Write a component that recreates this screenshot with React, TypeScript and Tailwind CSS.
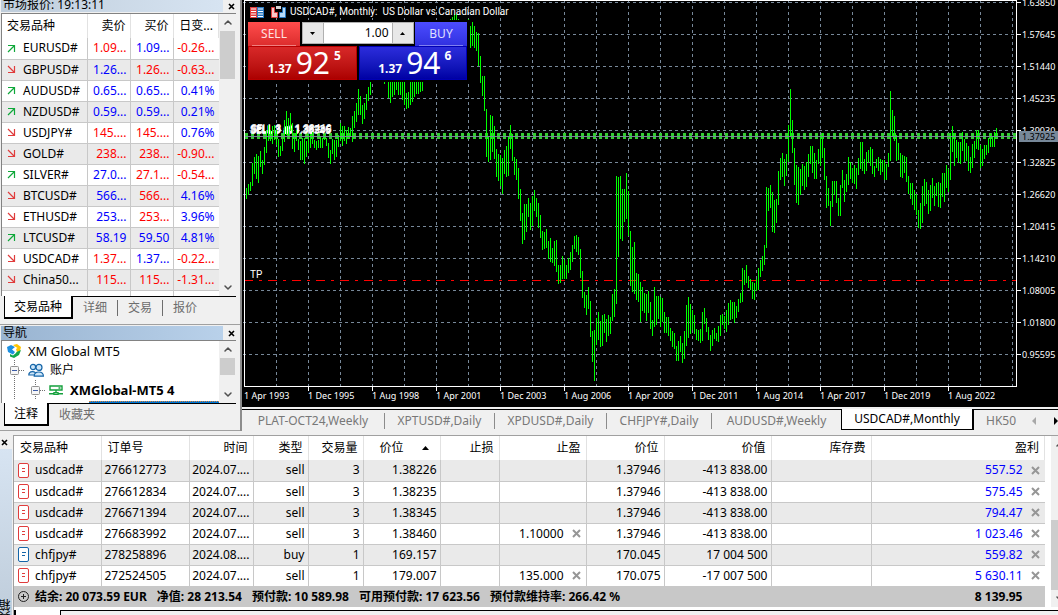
import { clsx } from "clsx";
import { ChevronDown, ChevronUp } from "lucide-react";

type Tone = "up" | "down";

type Quote = {
  symbol: string;
  trend: Tone;
  bid: [string, Tone];
  ask: [string, Tone];
  change: [string, Tone];
};

const quotes: Quote[] = [
  { symbol: "EURUSD#", trend: "up", bid: ["1.09...", "down"], ask: ["1.09...", "up"], change: ["-0.26...", "down"] },
  { symbol: "GBPUSD#", trend: "down", bid: ["1.26...", "up"], ask: ["1.26...", "down"], change: ["-0.63...", "down"] },
  { symbol: "AUDUSD#", trend: "up", bid: ["0.65...", "up"], ask: ["0.65...", "up"], change: ["0.41%", "up"] },
  { symbol: "NZDUSD#", trend: "up", bid: ["0.59...", "up"], ask: ["0.59...", "up"], change: ["0.21%", "up"] },
  { symbol: "USDJPY#", trend: "down", bid: ["145....", "down"], ask: ["145....", "down"], change: ["0.76%", "up"] },
  { symbol: "GOLD#", trend: "down", bid: ["238...", "down"], ask: ["238...", "down"], change: ["-0.90...", "down"] },
  { symbol: "SILVER#", trend: "up", bid: ["27.0...", "up"], ask: ["27.1...", "down"], change: ["-0.54...", "down"] },
  { symbol: "BTCUSD#", trend: "down", bid: ["566...", "up"], ask: ["566...", "down"], change: ["4.16%", "up"] },
  { symbol: "ETHUSD#", trend: "down", bid: ["253...", "up"], ask: ["253...", "down"], change: ["3.96%", "up"] },
  { symbol: "LTCUSD#", trend: "up", bid: ["58.19", "up"], ask: ["59.50", "up"], change: ["4.81%", "up"] },
  { symbol: "USDCAD#", trend: "down", bid: ["1.37...", "down"], ask: ["1.37...", "up"], change: ["-0.22...", "down"] },
  { symbol: "China50...", trend: "down", bid: ["115...", "down"], ask: ["115...", "down"], change: ["-1.31...", "down"] },
];

type Position = {
  symbol: string;
  order: string;
  time: string;
  type: "sell" | "buy";
  volume: string;
  open: string;
  tp?: string;
  price: string;
  value: string;
  profit: string;
};

const positions: Position[] = [
  { symbol: "usdcad#", order: "276612773", time: "2024.07....", type: "sell", volume: "3", open: "1.38226", price: "1.37946", value: "-413 838.00", profit: "557.52" },
  { symbol: "usdcad#", order: "276612834", time: "2024.07....", type: "sell", volume: "3", open: "1.38235", price: "1.37946", value: "-413 838.00", profit: "575.45" },
  { symbol: "usdcad#", order: "276671394", time: "2024.07....", type: "sell", volume: "3", open: "1.38345", price: "1.37946", value: "-413 838.00", profit: "794.47" },
  { symbol: "usdcad#", order: "276683992", time: "2024.07....", type: "sell", volume: "3", open: "1.38460", tp: "1.10000", price: "1.37946", value: "-413 838.00", profit: "1 023.46" },
  { symbol: "chfjpy#", order: "278258896", time: "2024.08....", type: "buy", volume: "1", open: "169.157", price: "170.045", value: "17 004 500", profit: "559.82" },
  { symbol: "chfjpy#", order: "272524505", time: "2024.07....", type: "sell", volume: "1", open: "179.007", tp: "135.000", price: "170.075", value: "-17 007 500", profit: "5 630.11" },
];

const summary = ["结余: 20 073.59 EUR", "净值: 28 213.54", "预付款: 10 589.98", "可用预付款: 17 623.56", "预付款维持率: 266.42 %"];

// high/low of every monthly bar, in plot units from the top
const bars: [number, number][] = [
  [188, 199], [184, 195], [182, 191], [163, 186], [157, 174], [154, 179], [156, 183], [151, 167], [160, 174], [147, 165],
  [130, 153], [125, 141], [130, 141], [126, 144], [125, 140], [130, 145], [139, 157], [146, 156], [139, 151], [120, 142],
  [111, 135], [118, 136], [113, 131], [123, 149], [133, 152], [130, 141], [139, 150], [141, 160], [138, 160], [138, 164],
  [141, 157], [134, 153], [134, 148], [132, 144], [140, 148], [141, 150], [140, 148], [137, 148], [138, 148], [135, 140],
  [138, 146], [143, 158], [150, 164], [139, 154], [140, 160], [140, 157], [135, 147], [123, 141], [126, 146], [126, 141],
  [130, 144], [127, 138], [128, 136], [116, 142], [111, 128], [103, 122], [89, 115], [96, 115], [105, 124], [103, 119],
  [94, 110], [87, 101], [78, 95], [60, 80], [58, 78], [55, 76], [54, 78], [58, 80], [62, 81], [66, 84],
  [64, 81], [72, 98], [78, 103], [76, 97], [72, 95], [70, 90], [72, 95], [74, 95], [78, 100], [80, 105],
  [93, 109], [92, 108], [80, 105], [78, 102], [74, 97], [70, 94], [70, 94], [68, 92], [66, 91], [50, 80],
  [44, 78], [40, 76], [38, 74], [36, 70], [34, 66], [32, 62], [30, 60], [28, 58], [26, 56], [24, 52],
  [22, 50], [21, 48], [19, 46], [17, 44], [14, 40], [14, 42], [19, 44], [24, 48], [26, 50], [24, 48],
  [22, 46], [19, 48], [26, 48], [22, 46], [26, 48], [32, 51], [33, 66], [56, 83], [76, 96], [76, 111],
  [109, 157], [136, 162], [115, 160], [116, 152], [126, 159], [149, 177], [154, 181], [155, 186], [158, 194], [150, 174],
  [146, 177], [136, 176], [125, 149], [134, 161], [157, 175], [159, 180], [168, 199], [189, 221], [213, 244], [204, 240],
  [204, 232], [198, 217], [203, 230], [196, 226], [190, 211], [198, 217], [203, 228], [215, 238], [231, 250], [232, 249],
  [229, 248], [241, 259], [238, 262], [248, 263], [241, 266], [240, 272], [265, 284], [265, 283], [256, 279], [260, 279],
  [265, 279], [258, 273], [252, 270], [245, 262], [236, 249], [235, 252], [237, 255], [249, 278], [271, 298], [292, 308],
  [295, 315], [287, 309], [301, 337], [331, 362], [330, 381], [318, 345], [312, 340], [321, 347], [315, 346], [314, 333],
  [319, 342], [315, 336], [317, 334], [294, 321], [289, 317], [176, 304], [177, 257], [176, 239], [189, 241], [189, 222],
  [173, 219], [191, 236], [231, 286], [247, 292], [242, 294], [273, 300], [274, 302], [282, 322], [287, 311], [293, 313],
  [294, 321], [291, 313], [302, 329], [320, 336], [287, 327], [296, 325], [296, 319], [297, 327], [298, 322], [312, 333],
  [317, 333], [317, 336], [328, 341], [331, 347], [333, 349], [346, 361], [341, 361], [336, 352], [343, 363], [331, 359],
  [305, 346], [297, 338], [304, 334], [310, 330], [315, 334], [329, 340], [330, 341], [329, 343], [312, 341], [308, 324],
  [318, 332], [327, 340], [335, 351], [330, 346], [328, 339], [333, 341], [326, 342], [315, 336], [314, 325], [316, 329],
  [310, 332], [303, 325], [300, 320], [302, 319], [302, 323], [306, 318], [299, 312], [293, 303], [268, 302], [270, 285],
  [265, 283], [276, 288], [279, 290], [282, 299], [283, 300], [279, 291], [268, 290], [260, 277], [256, 271], [245, 265],
  [187, 248], [188, 211], [185, 208], [192, 232], [200, 233], [199, 223], [171, 205], [158, 180], [153, 177], [159, 186],
  [154, 176], [125, 162], [89, 137], [120, 153], [148, 185], [165, 203], [167, 205], [169, 195], [164, 186], [166, 190],
  [162, 187], [154, 177], [146, 164], [146, 173], [153, 179], [160, 179], [149, 164], [135, 166], [133, 158], [148, 180],
  [176, 208], [188, 206], [201, 226], [181, 207], [181, 195], [181, 203], [198, 216], [185, 216], [170, 188], [180, 202],
  [174, 192], [157, 185], [162, 179], [168, 183], [165, 184], [168, 189], [158, 175], [142, 169], [142, 171], [159, 174],
  [152, 171], [150, 163], [147, 166], [149, 174], [166, 177], [159, 168], [157, 171], [159, 175], [160, 172], [160, 180],
  [164, 180], [153, 167], [91, 161], [110, 136], [116, 141], [135, 161], [143, 160], [153, 177], [155, 178], [156, 173],
  [157, 182], [176, 194], [183, 199], [183, 205], [190, 210], [194, 215], [210, 228], [203, 229], [186, 223], [179, 206],
  [182, 204], [190, 214], [185, 211], [178, 198], [186, 206], [183, 196], [182, 207], [183, 208], [173, 197], [173, 202],
  [165, 188], [169, 192], [133, 180], [126, 152], [133, 166], [140, 158], [142, 163], [142, 164], [132, 151], [139, 162],
  [143, 161], [146, 171], [157, 173], [144, 168], [141, 158], [130, 149], [130, 150], [145, 168], [149, 166], [145, 159],
  [145, 155], [138, 153], [134, 147], [137, 147], [132, 147], [128, 138],
];

const prices = ["1.63850", "1.57645", "1.51440", "1.45235", "1.39030", "1.32825", "1.26620", "1.20415", "1.14210", "1.08005", "1.01800", "0.95595"];
const dates = ["1 Apr 1993", "1 Dec 1995", "1 Aug 1998", "1 Apr 2001", "1 Dec 2003", "1 Aug 2006", "1 Apr 2009", "1 Dec 2011", "1 Aug 2014", "1 Apr 2017", "1 Dec 2019", "1 Aug 2022"];

function toneClass(tone: Tone) {
  return tone === "up" ? "text-[#0000ff]" : "text-[#ff0000]";
}

function CloseIcon({ className }: { className?: string }) {
  return (
    <svg viewBox="0 0 7 7" className={clsx("size-[7px]", className)} aria-hidden="true">
      <path d="M1 1 L6 6 M6 1 L1 6" stroke="currentColor" strokeWidth="1.6" />
    </svg>
  );
}

function TrendArrow({ trend }: { trend: Tone }) {
  return trend === "up" ? (
    <svg viewBox="0 0 9 9" className="size-[9px] shrink-0 text-[#0fa83a]" aria-label="up">
      <path d="M1 1.5 H7.5 V8 M7 2 L1 8" fill="none" stroke="currentColor" strokeWidth="1.2" />
    </svg>
  ) : (
    <svg viewBox="0 0 9 9" className="size-[9px] shrink-0 text-[#e03c3c]" aria-label="down">
      <path d="M1 7.5 H7.5 V1 M7 7 L1 1" fill="none" stroke="currentColor" strokeWidth="1.2" />
    </svg>
  );
}

function PanelTitle({ title, className }: { title: string; className: string }) {
  return (
    <div className="flex items-center justify-between pr-[5px] pl-px">
      <h2 className={clsx("w-[222px] pl-0.5", className)}>{title}</h2>
      <button type="button" aria-label="关闭" className="text-black">
        <CloseIcon />
      </button>
    </div>
  );
}

function ScrollBar({ thumb }: { thumb: string }) {
  return (
    <div className="flex w-[17px] shrink-0 flex-col items-center bg-[#f0f0f0] text-[#505050]">
      <ChevronUp className="h-[17px] w-3 shrink-0" strokeWidth={3} />
      <div className={clsx("w-[15px] bg-[#cdcdcd]", thumb)} />
      <div className="flex-1" />
      <ChevronDown className="h-[17px] w-3 shrink-0" strokeWidth={3} />
    </div>
  );
}

function PanelTabs({ tabs, active }: { tabs: string[]; active: string }) {
  return (
    <div className="flex h-6 shrink-0 items-start pl-1">
      <button type="button" className={clsx("h-[23px] border-r-2 border-b-2 border-l border-black bg-white text-black", active)}>
        {tabs[0]}
      </button>
      <div className="mr-1 flex flex-1 border-t border-black">
        {tabs.slice(1).map((tab, i) => (
          <button
            key={tab}
            type="button"
            className={clsx("mt-[3px] h-4 px-[10px] leading-4 text-[#6d6d6d]", i < tabs.length - 2 && "border-r border-[#6d6d6d]")}
          >
            {tab}
          </button>
        ))}
      </div>
    </div>
  );
}

function MarketWatch() {
  return (
    <section className="flex h-[325px] flex-col border-b border-[#a0a0a0]">
      <PanelTitle title="市场报价: 19:13:11" className="mb-px h-3 bg-gradient-to-r from-[#bfcddb] to-[#d7e4f2] leading-[10px]" />
      <div className="mr-1 ml-px flex min-h-0 flex-1 border-t border-l border-[#828282] bg-white">
        <div className="min-w-0 flex-1 overflow-hidden">
          <table className="w-full table-fixed border-collapse">
            <colgroup>
              <col className="w-[85px]" />
              <col className="w-[43px]" />
              <col className="w-[43px]" />
              <col />
            </colgroup>
            <thead>
              <tr className="h-6">
                <th className="border-r border-[#e2e2e2] p-0 pl-[5px] text-left font-normal">交易品种</th>
                <th className="border-r border-[#e2e2e2] p-0 pr-1 text-right font-normal">卖价</th>
                <th className="border-r border-[#e2e2e2] p-0 pr-1 text-right font-normal">买价</th>
                <th className="border-r border-[#e2e2e2] p-0 pr-[5px] text-right font-normal">日变...</th>
              </tr>
            </thead>
            <tbody>
              {quotes.map((q) => (
                <tr key={q.symbol} className="h-[21px] border-b border-[#c8c8c8] even:bg-[#eaeaea]">
                  <td className="border-r border-[#c8c8c8] p-0 pl-[5px]">
                    <div className="flex items-center gap-[7px]">
                      <TrendArrow trend={q.trend} />
                      {q.symbol}
                    </div>
                  </td>
                  <td className={clsx("border-r border-[#c8c8c8] p-0 pr-[3px] text-right", toneClass(q.bid[1]))}>{q.bid[0]}</td>
                  <td className={clsx("border-r border-[#c8c8c8] p-0 pr-[3px] text-right", toneClass(q.ask[1]))}>{q.ask[0]}</td>
                  <td className={clsx("p-0 pr-1 text-right", toneClass(q.change[1]))}>{q.change[0]}</td>
                </tr>
              ))}
              <tr className="h-[21px]">
                <td className="border-r border-[#c8c8c8]" />
                <td className="border-r border-[#c8c8c8]" />
                <td className="border-r border-[#c8c8c8]" />
                <td />
              </tr>
            </tbody>
          </table>
        </div>
        <ScrollBar thumb="h-12" />
      </div>
      <PanelTabs tabs={["交易品种", "详细", "交易", "报价"]} active="w-[69px]" />
      <div className="h-1" />
    </section>
  );
}

function TreeToggle() {
  return (
    <svg viewBox="0 0 15 20" className="h-5 w-[15px] shrink-0" aria-hidden="true">
      <path d="M4.5 0 V20" stroke="#707070" strokeDasharray="1 1" />
      <path d="M9 10.5 H15" stroke="#707070" strokeDasharray="1 1" />
      <rect x="0.5" y="6.5" width="8" height="8" rx="1" fill="#f6f6f6" stroke="#919191" />
      <path d="M2 10.5 H7" stroke="#3c5ca8" />
    </svg>
  );
}

function Navigator() {
  return (
    <section className="flex h-[106px] flex-col border-b border-[#a0a0a0] pt-px">
      <PanelTitle title="导航" className="h-[14px] bg-gradient-to-r from-[#99b4d1] to-[#b9d1ea] leading-[14px]" />
      <div className="mr-1 ml-px flex min-h-0 flex-1 border-t border-l border-[#828282] bg-white">
        <div className="min-w-0 flex-1 overflow-hidden">
          <div className="flex h-[19px] items-center gap-[7px] pl-[5px]">
            <svg viewBox="0 0 14 14" className="size-[14px] shrink-0" aria-hidden="true">
              <path d="M0 3 L4 1 L8 3 L5 5.5 L8 8 L6 10.5 L1 8 Z" fill="#1c8fe0" />
              <path d="M6 1 L10 0 L14 3 L13 7 L10 8 L9 5 L10.5 4 L8 2.5 Z" fill="#ffc400" />
              <path d="M3 10 L6 11.5 L9 9 L9.5 8 L14 6 L12 11 L7 14 L3 12.5 Z" fill="#12a84c" />
            </svg>
            <span className="text-[13px]">XM Global MT5</span>
          </div>
          <div className="flex h-5 items-center pl-2">
            <TreeToggle />
            <svg viewBox="0 0 16 14" className="mr-1.5 ml-[3px] h-[14px] w-4 shrink-0" fill="#cfe6f8" stroke="#1565a8" strokeWidth="1.2" aria-hidden="true">
              <circle cx="5" cy="4" r="2.6" />
              <path d="M0.8 12 C0.8 8 8 7 8 12 Z" />
              <circle cx="11" cy="4.4" r="3" />
              <path d="M6.2 13.2 C6.2 7.6 15.4 7.6 15.4 13.2 Z" />
            </svg>
            账户
          </div>
          <div className="flex h-5 items-center pl-[12px]">
            <svg viewBox="0 0 1 20" className="mr-4 h-5 w-px shrink-0" aria-hidden="true">
              <path d="M0.5 0 V20" stroke="#707070" strokeDasharray="1 1" />
            </svg>
            <TreeToggle />
            <svg viewBox="0 0 14 10" className="mr-[7px] ml-[3px] h-[10px] w-[14px] shrink-0" fill="none" stroke="#14a03c" strokeWidth="1.4" aria-hidden="true">
              <path d="M1 1 H13 V5 H1 Z M7 5 V8.5 M0 8.8 H5 M9 8.8 H14" />
              <path d="M5 7.6 H9 V9.6 H5 Z M9.5 3 H11.5" />
            </svg>
            <span className="text-[13px] font-bold">XMGlobal-MT5 4</span>
          </div>
          <div className="mt-px ml-[87px] h-2 border-t border-dotted border-[#e08030] bg-[#0078d7]" />
        </div>
        <ScrollBar thumb="h-[17px]" />
      </div>
      <PanelTabs tabs={["注释", "收藏夹"]} active="w-[45px]" />
      <div className="h-[3px]" />
    </section>
  );
}

function QuoteButton({ side, prefix, big, pip }: { side: "sell" | "buy"; prefix: string; big: string; pip: string }) {
  return (
    <button
      type="button"
      className={clsx(
        "flex h-[34px] flex-1 items-end justify-center border text-white",
        side === "sell"
          ? "border-[#b80000] bg-gradient-to-b from-[#d82828] to-[#ac0000]"
          : "border-[#0000b4] bg-gradient-to-b from-[#2c2cdc] to-[#0000a4]",
      )}
    >
      <span className="pb-1 pl-1 text-[12px] leading-3 font-bold">{prefix}</span>
      <span className="ml-1 h-8 text-[30px] leading-8">{big}</span>
      <span className="mb-[17px] ml-1 text-[12px] leading-3 font-bold">{pip}</span>
    </button>
  );
}

function OneClickTrading() {
  return (
    <div className="absolute top-5 left-1 flex w-[223px] flex-col bg-black p-0.5">
      <div className="flex h-6 items-start justify-between">
        <button type="button" className="flex h-6 w-[52px] flex-col items-center bg-gradient-to-b from-[#ff4c4c] to-[#dc2c2c] text-[#ffe0e0]">
          <span className="flex-1 leading-[23px]">SELL</span>
          <span className="h-0.5 w-11 border-b border-[#f08080] bg-[#900000]" />
        </button>
        <div className="flex h-[22px] w-28 border border-[#b0b0b0] bg-white text-black">
          <button type="button" aria-label="减少手数" className="flex w-[21px] items-center justify-center border-r border-[#b0b0b0] bg-[#e8e8e8]">
            <svg viewBox="0 0 5 3" className="h-[3px] w-[5px]"><path d="M0 0 H5 L2.5 3 Z" /></svg>
          </button>
          <input type="text" aria-label="手数" defaultValue="1.00" className="min-w-0 flex-1 pr-[3px] text-right text-[12px] outline-none" />
          <button type="button" aria-label="增加手数" className="flex w-[21px] items-center justify-center border-l border-[#b0b0b0] bg-[#e8e8e8]">
            <svg viewBox="0 0 5 3" className="h-[3px] w-[5px]"><path d="M0 3 H5 L2.5 0 Z" /></svg>
          </button>
        </div>
        <button type="button" className="flex h-6 w-[52px] flex-col items-center bg-gradient-to-b from-[#4c4cff] to-[#3030e0] text-[#e0e0ff]">
          <span className="flex-1 leading-[23px]">BUY</span>
          <span className="h-0.5 w-11 border-b border-[#8080f0] bg-[#000090]" />
        </button>
      </div>
      <div className="flex gap-0.5">
        <QuoteButton side="sell" prefix="1.37" big="92" pip="5" />
        <QuoteButton side="buy" prefix="1.37" big="94" pip="6" />
      </div>
    </div>
  );
}

function ChartPlot() {
  return (
    <svg className="h-[407px] min-w-0 flex-1" role="img" aria-label="USDCAD# Monthly">
      <g stroke="#778899" strokeDasharray="3 3">
        {prices.map((p, i) => (
          <line key={p} x1="1" x2="100%" y1={2.5 + 32 * i} y2={2.5 + 32 * i} />
        ))}
        {Array.from({ length: 24 }, (_, i) => (
          <line key={i} x1={34.5 + 32 * i} x2={34.5 + 32 * i} y1="0" y2="386" />
        ))}
      </g>
      <line x1="3" x2="100%" y1="136" y2="136" stroke="#32cd32" strokeWidth="6" strokeDasharray="3 3" />
      <line x1="2" x2="100%" y1="280.5" y2="280.5" stroke="#ff0000" strokeDasharray="9 6 3 6" />
      <g fill="#ffffff" className="font-[Roboto,sans-serif] text-[10px]">
        <text x="8" y="133">SELL 3 at 1.38226</text>
        <text x="9" y="133">SELL 3 at 1.38235</text>
        <text x="8" y="134">SELL 3 at 1.38345</text>
        <text x="9" y="132">SELL 3 at 1.38460</text>
        <text x="8" y="278">TP</text>
      </g>
      <g fill="#00ff00">
        {bars.map(([high, low], i) => (
          <rect key={i} x={4 + 2 * i} y={high} width="1" height={low - high} />
        ))}
      </g>
      <line x1="2" x2="100%" y1="136.5" y2="136.5" stroke="#778899" />
      <g stroke="#ffffff">
        <line x1="2.5" x2="2.5" y1="0" y2="386" />
        <line x1="2" x2="100%" y1="0.5" y2="0.5" />
        <line x1="2" x2="100%" y1="386.5" y2="386.5" />
        {dates.slice(1).map((d, i) => (
          <line key={d} x1={66.5 + 64 * i} x2={66.5 + 64 * i} y1="386" y2="391" />
        ))}
      </g>
      <g fill="#ffffff" className="text-[9px]">
        {dates.map((d, i) => (
          <text key={d} x={2 + 64 * i} y="399">{d}</text>
        ))}
      </g>
    </svg>
  );
}

function PriceAxis() {
  return (
    <svg className="h-[407px] w-[42px] shrink-0 text-[9px]" aria-hidden="true">
      <line x1="0.5" x2="0.5" y1="0" y2="387" stroke="#ffffff" />
      {prices.map((p, i) => (
        <g key={p}>
          <line x1="1" x2="5" y1={2.5 + 32 * i} y2={2.5 + 32 * i} stroke="#ffffff" />
          <text x="6" y={6 + 32 * i} fill="#ffffff">{p}</text>
        </g>
      ))}
      <rect x="3" y="131" width="39" height="11" fill="#778899" />
      <text x="6" y="140" fill="#000000">1.37925</text>
    </svg>
  );
}

function ChartHeader() {
  return (
    <div className="absolute top-1 left-2 flex h-4 items-center text-white">
      <svg viewBox="0 0 14 11" className="h-[11px] w-[14px]" aria-hidden="true">
        <rect width="7" height="11" fill="#e03c3c" />
        <rect x="7" width="7" height="11" fill="#2878c0" />
        <path d="M1 2 H6 M1 4.5 H6 M1 7 H6 M1 9.5 H6 M8 2 H13 M8 4.5 H13 M8 7 H13 M8 9.5 H13" stroke="#ffffff" strokeWidth="1.2" />
      </svg>
      <svg viewBox="0 0 15 12" className="ml-[7px] h-3 w-[15px]" aria-hidden="true">
        <path d="M0.5 1.5 H3.5 V6.5 H6.5 V11.5 H0.5 Z" fill="#f8c8c8" stroke="#e03c3c" />
        <path d="M14.5 1.5 H11.5 V6.5 H8.5 V11.5 H14.5 Z" fill="#b8dcf8" stroke="#2878c0" />
        <rect x="5" width="5" height="3" fill="#d8d8d8" />
      </svg>
      <h1 className="ml-1 font-[Roboto,sans-serif] text-[10px] whitespace-pre">USDCAD#, Monthly:  US Dollar vs Canadian Dollar</h1>
    </div>
  );
}

function ChartTabs() {
  const tab = "h-4 shrink-0 border-r border-[#8c8c8c] text-center leading-4 text-[#787878]";
  return (
    <div className="flex h-6 items-start overflow-hidden bg-[#f0f0f0] pt-0.5">
      <div className="flex h-5 items-end border-t border-black">
        <button type="button" className={clsx(tab, "w-[143px]")}>PLAT-OCT24,Weekly</button>
        <button type="button" className={clsx(tab, "w-[110px]")}>XPTUSD#,Daily</button>
        <button type="button" className={clsx(tab, "w-[112px]")}>XPDUSD#,Daily</button>
        <button type="button" className={clsx(tab, "w-[105px]")}>CHFJPY#,Daily</button>
        <button type="button" className={clsx(tab, "w-[129px] border-r-0")}>AUDUSD#,Weekly</button>
      </div>
      <button type="button" className="h-[21px] w-[133px] shrink-0 border border-t-0 border-r-2 border-black bg-white text-black">USDCAD#,Monthly</button>
      <div className="flex h-5 flex-1 items-end justify-between border-t border-black">
        <button type="button" className="h-4 px-3 leading-4 text-[#787878]">HK50</button>
        <div className="flex h-4 items-center gap-[18px]">
          <button type="button" aria-label="向左滚动">
            <svg viewBox="0 0 4 8" className="h-2 w-1" fill="#a8a8a8"><path d="M4 0 V8 L0 4 Z" /></svg>
          </button>
          <button type="button" aria-label="向右滚动">
            <svg viewBox="0 0 4 8" className="h-2 w-1"><path d="M0 0 V8 L4 4 Z" /></svg>
          </button>
        </div>
      </div>
    </div>
  );
}

function OrderIcon({ type }: { type: Position["type"] }) {
  return (
    <svg viewBox="0 0 11 15" className="h-[15px] w-[11px] shrink-0" fill="#ffffff" stroke={type === "sell" ? "#e03c3c" : "#1565a8"} aria-hidden="true">
      <rect x="0.5" y="0.5" width="10" height="14" rx="1.5" />
      <path d={type === "sell" ? "M4 5.5 H7 M4 8.5 H7" : "M4 5.5 H8 M4 8.5 H7"} />
    </svg>
  );
}

function RowClose({ label }: { label: string }) {
  return (
    <button type="button" aria-label={label} className="shrink-0 text-[#969696]">
      <svg viewBox="0 0 9 9" className="size-[9px]" aria-hidden="true">
        <path d="M1 1 L8 8 M8 1 L1 8" stroke="currentColor" strokeWidth="2" />
      </svg>
    </button>
  );
}

function Toolbox() {
  const head = "border-r border-[#e2e2e2] p-0 pr-[5px] text-right font-normal";
  const cell = "border-r border-[#c8c8c8] p-0 pr-[3px] text-right";
  return (
    <section className="flex min-h-0 flex-1 bg-[#f0f0f0] pt-1">
      <div className="flex w-[13px] shrink-0 flex-col items-start">
        <button type="button" aria-label="关闭" className="flex h-[14px] items-center pl-px">
          <CloseIcon />
        </button>
        <div className="flex min-h-0 w-3 flex-1 items-end overflow-hidden bg-gradient-to-b from-[#d7e4f2] to-[#bfcddb]">
          <span className="-mb-5 rotate-180 text-[12px] leading-3 [writing-mode:vertical-rl]">工具箱</span>
        </div>
      </div>
      <div className="flex min-w-0 flex-1 flex-col border-t border-l border-[#a0a0a0] bg-white">
        <div className="flex">
          <table className="mr-1.5 min-w-0 flex-1 table-fixed border-collapse">
            <colgroup>
              <col className="w-[87px]" />
              <col className="w-[88px]" />
              <col className="w-[64px]" />
              <col className="w-[55px]" />
              <col className="w-[55px]" />
              <col className="w-[77px]" />
              <col className="w-[59px]" />
              <col className="w-[87px]" />
              <col className="w-[78px]" />
              <col className="w-[107px]" />
              <col className="w-[100px]" />
              <col />
            </colgroup>
            <thead>
              <tr className="h-6">
                <th className={clsx(head, "pl-1.5 !text-left")}>交易品种</th>
                <th className={clsx(head, "pl-1.5 !text-left")}>订单号</th>
                <th className={head}>时间</th>
                <th className={head}>类型</th>
                <th className={head}>交易量</th>
                <th className={head}>
                  <div className="flex items-center justify-end gap-[18px] pr-1.5">
                    价位
                    <svg viewBox="0 0 7 4" className="h-1 w-[7px]"><path d="M0 4 H7 L3.5 0 Z" /></svg>
                  </div>
                </th>
                <th className={head}>止损</th>
                <th className={head}>止盈</th>
                <th className={head}>价位</th>
                <th className={head}>价值</th>
                <th className={head}>库存费</th>
                <th className={head}>盈利</th>
              </tr>
            </thead>
            <tbody>
              {positions.map((p) => (
                <tr key={p.order} className="h-[21px] border-b border-[#c8c8c8] odd:bg-[#eaeaea]">
                  <td className="border-r border-[#c8c8c8] p-0 pl-1">
                    <div className="flex items-center gap-1.5">
                      <OrderIcon type={p.type} />
                      {p.symbol}
                    </div>
                  </td>
                  <td className="border-r border-[#c8c8c8] p-0 pl-[3px]">{p.order}</td>
                  <td className={cell}>{p.time}</td>
                  <td className={cell}>{p.type}</td>
                  <td className={cell}>{p.volume}</td>
                  <td className={cell}>{p.open}</td>
                  <td className={cell} />
                  <td className={cell}>
                    {p.tp && (
                      <div className="flex items-center justify-end gap-2 pr-0.5">
                        {p.tp}
                        <RowClose label="取消止盈" />
                      </div>
                    )}
                  </td>
                  <td className={cell}>{p.price}</td>
                  <td className={cell}>{p.value}</td>
                  <td className={cell} />
                  <td className="p-0 pr-[5px] text-[#0000ff]">
                    <div className="flex items-center justify-end gap-2">
                      {p.profit}
                      <RowClose label="平仓" />
                    </div>
                  </td>
                </tr>
              ))}
            </tbody>
            <tfoot>
              <tr className="h-[21px] bg-[#c8c8c8] font-bold">
                <td colSpan={11} className="p-0 pl-1">
                  <div className="flex items-center gap-[10px] whitespace-nowrap">
                    <svg viewBox="0 0 11 11" className="-mr-1 size-[11px]" fill="none" stroke="#202020" aria-hidden="true">
                      <circle cx="5.5" cy="5.5" r="5" />
                      <path d="M3 5.5 H8 M5.5 3 V8" />
                    </svg>
                    {summary.map((item) => (
                      <span key={item}>{item}</span>
                    ))}
                  </div>
                </td>
                <td className="p-0 pr-[22px] text-right">8 139.95</td>
              </tr>
            </tfoot>
          </table>
          <div className="flex w-[7px] shrink-0 flex-col items-end overflow-hidden bg-[#f0f0f0] text-[#505050]">
            <ChevronUp className="-mr-2 h-[17px] w-3 shrink-0" strokeWidth={3} />
            <div className="flex-1" />
            <div className="h-[70px] w-full bg-[#cdcdcd]" />
            <ChevronDown className="-mr-2 h-[17px] w-3 shrink-0" strokeWidth={3} />
          </div>
        </div>
        <div className="mt-[3px] flex flex-1">
          <div className="w-[46px] border-l-2 border-black bg-white" />
          <div className="flex-1 border-t border-l border-black bg-[#f0f0f0]" />
        </div>
      </div>
    </section>
  );
}

export default function App() {
  return (
    <div className="flex h-screen flex-col overflow-hidden bg-[#f0f0f0] font-['Noto_Sans','Noto_Sans_CJK_SC',sans-serif] text-[12px] leading-[18px] text-black">
      <div className="flex shrink-0">
        <aside className="w-[242px] shrink-0 border-r-2 border-[#8c8c8c]">
          <MarketWatch />
          <Navigator />
        </aside>
        <main className="min-w-0 flex-1">
          <div className="relative flex bg-black">
            <ChartPlot />
            <PriceAxis />
            <ChartHeader />
            <OneClickTrading />
          </div>
          <ChartTabs />
        </main>
      </div>
      <Toolbox />
    </div>
  );
}
